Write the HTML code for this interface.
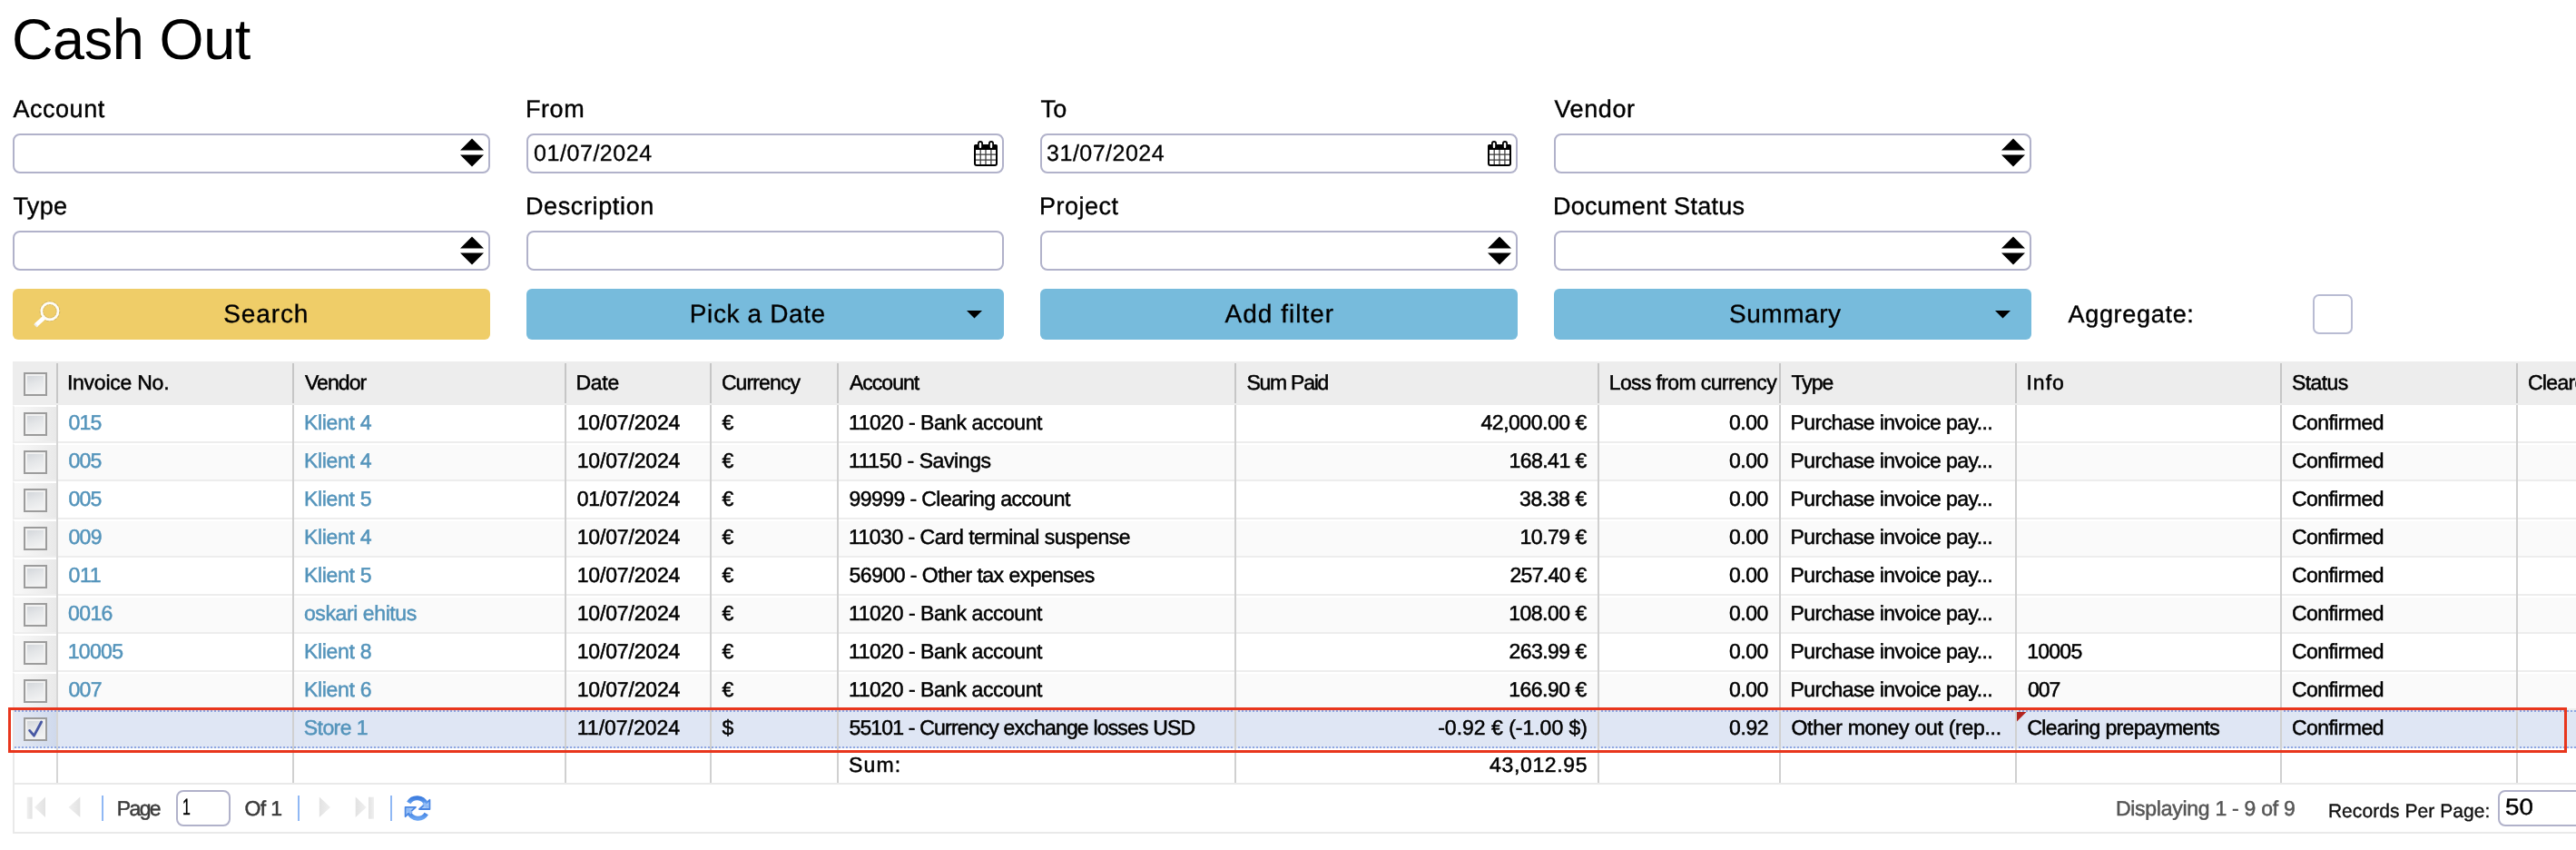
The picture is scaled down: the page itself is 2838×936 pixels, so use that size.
<!DOCTYPE html>
<html><head><meta charset="utf-8"><title>Cash Out</title>
<style>
html,body{margin:0;padding:0;background:#fff;}
body{width:2838px;height:936px;position:relative;overflow:hidden;font-family:"Liberation Sans",sans-serif;}
.t{position:absolute;white-space:nowrap;text-rendering:geometricPrecision;}
.a{position:absolute;}
.inp{position:absolute;box-sizing:border-box;width:526px;height:44px;border:2px solid #b1b2ca;border-radius:8px;background:#fff;}
.btn{position:absolute;width:526px;height:56px;border-radius:6px;}
.blue{background:#77bbdc;}
.yel{background:#efcd68;}
.cb{position:absolute;box-sizing:border-box;width:26px;height:26px;border:2px solid #9c9c9c;background:linear-gradient(160deg,#cfd3d8 0%,#e4e6e8 45%,#f6f6f6 100%);box-shadow:inset 0 0 0 2px #f1f1f1;}
.vs{position:absolute;width:2px;background:#d0d0d0;}
.hs{position:absolute;width:2px;background:#c6c6c6;top:400px;height:44px;}
.row{position:absolute;left:14px;width:2824px;height:42px;box-sizing:border-box;border-top:2px solid #fff;border-bottom:2px solid #ededed;border-left:2px solid #ededed;}
.cc{position:absolute;left:16px;width:46px;height:38px;background:linear-gradient(90deg,#f8f8f8 0%,#f1f1f1 50%,#e9e9e9 100%);}
#w{position:absolute;left:0;top:0;width:2838px;height:936px;will-change:transform;}
</style></head><body><div id="w">
<div class="t" style="top:3.00px;font-size:63px;line-height:82px;color:#000;letter-spacing:-0.375px;left:12.88px;">Cash Out</div>
<div class="t" style="top:103.00px;font-size:27px;line-height:35px;color:#000;letter-spacing:0.521px;-webkit-text-stroke:0.38px #000;left:14.50px;">Account</div>
<div class="t" style="top:210.00px;font-size:27px;line-height:35px;color:#000;letter-spacing:0.383px;-webkit-text-stroke:0.38px #000;left:14.38px;">Type</div>
<div class="inp" style="left:14px;top:147px"></div>
<div class="inp" style="left:14px;top:254px"></div>
<div class="t" style="top:103.00px;font-size:27px;line-height:35px;color:#000;letter-spacing:0.625px;-webkit-text-stroke:0.38px #000;left:578.88px;">From</div>
<div class="t" style="top:210.00px;font-size:27px;line-height:35px;color:#000;letter-spacing:0.637px;-webkit-text-stroke:0.38px #000;left:578.88px;">Description</div>
<div class="inp" style="left:580px;top:147px"></div>
<div class="inp" style="left:580px;top:254px"></div>
<div class="t" style="top:103.00px;font-size:27px;line-height:35px;color:#000;letter-spacing:0.250px;-webkit-text-stroke:0.38px #000;left:1146.38px;">To</div>
<div class="t" style="top:210.00px;font-size:27px;line-height:35px;color:#000;letter-spacing:0.500px;-webkit-text-stroke:0.38px #000;left:1144.88px;">Project</div>
<div class="inp" style="left:1146px;top:147px"></div>
<div class="inp" style="left:1146px;top:254px"></div>
<div class="t" style="top:103.00px;font-size:27px;line-height:35px;color:#000;letter-spacing:0.625px;-webkit-text-stroke:0.38px #000;left:1712.38px;">Vendor</div>
<div class="t" style="top:210.00px;font-size:27px;line-height:35px;color:#000;letter-spacing:0.295px;-webkit-text-stroke:0.38px #000;left:1710.88px;">Document Status</div>
<div class="inp" style="left:1712px;top:147px"></div>
<div class="inp" style="left:1712px;top:254px"></div>
<svg class="a" style="left:507px;top:152px" width="26" height="32" viewBox="0 0 26 32"><path d="M13 0.5 L26 13.5 L0 13.5 Z M0 18.5 L26 18.5 L13 31.5 Z" fill="#000"/></svg>
<svg class="a" style="left:2205px;top:152px" width="26" height="32" viewBox="0 0 26 32"><path d="M13 0.5 L26 13.5 L0 13.5 Z M0 18.5 L26 18.5 L13 31.5 Z" fill="#000"/></svg>
<svg class="a" style="left:507px;top:260px" width="26" height="32" viewBox="0 0 26 32"><path d="M13 0.5 L26 13.5 L0 13.5 Z M0 18.5 L26 18.5 L13 31.5 Z" fill="#000"/></svg>
<svg class="a" style="left:1639px;top:260px" width="26" height="32" viewBox="0 0 26 32"><path d="M13 0.5 L26 13.5 L0 13.5 Z M0 18.5 L26 18.5 L13 31.5 Z" fill="#000"/></svg>
<svg class="a" style="left:2205px;top:260px" width="26" height="32" viewBox="0 0 26 32"><path d="M13 0.5 L26 13.5 L0 13.5 Z M0 18.5 L26 18.5 L13 31.5 Z" fill="#000"/></svg>
<svg class="a" style="left:1073px;top:155px" width="26" height="28" viewBox="0 0 26 28">
<rect x="1" y="5" width="24" height="22" rx="2" ry="2" fill="#fff" stroke="#000" stroke-width="2"/>
<rect x="0" y="4" width="26" height="6" rx="2" fill="#000"/>
<rect x="1" y="7" width="24" height="3" fill="#000"/>
<g stroke="#3a3a3a" stroke-width="1.25"><path d="M7.2 10V26M13 10V26M18.9 10V26M2 15.1H24M2 21H24"/></g>
<rect x="4" y="0" width="6" height="9" rx="3" fill="#000"/><rect x="16" y="0" width="6" height="9" rx="3" fill="#000"/>
<rect x="5.8" y="2" width="2.4" height="6" rx="1" fill="#fff"/><rect x="17.8" y="2" width="2.4" height="6" rx="1" fill="#fff"/>
</svg>
<svg class="a" style="left:1639px;top:155px" width="26" height="28" viewBox="0 0 26 28">
<rect x="1" y="5" width="24" height="22" rx="2" ry="2" fill="#fff" stroke="#000" stroke-width="2"/>
<rect x="0" y="4" width="26" height="6" rx="2" fill="#000"/>
<rect x="1" y="7" width="24" height="3" fill="#000"/>
<g stroke="#3a3a3a" stroke-width="1.25"><path d="M7.2 10V26M13 10V26M18.9 10V26M2 15.1H24M2 21H24"/></g>
<rect x="4" y="0" width="6" height="9" rx="3" fill="#000"/><rect x="16" y="0" width="6" height="9" rx="3" fill="#000"/>
<rect x="5.8" y="2" width="2.4" height="6" rx="1" fill="#fff"/><rect x="17.8" y="2" width="2.4" height="6" rx="1" fill="#fff"/>
</svg>
<div class="t" style="top:153.00px;font-size:25px;line-height:32px;color:#000;letter-spacing:0.542px;-webkit-text-stroke:0.3px #000;left:588.12px;">01/07/2024</div>
<div class="t" style="top:153.00px;font-size:25px;line-height:32px;color:#000;letter-spacing:0.486px;-webkit-text-stroke:0.3px #000;left:1153.12px;">31/07/2024</div>
<div class="btn yel" style="left:14px;top:318px"></div>
<div class="btn blue" style="left:580px;top:318px"></div>
<div class="btn blue" style="left:1146px;top:318px"></div>
<div class="btn blue" style="left:1712px;top:318px"></div>
<div class="t" style="top:328.00px;font-size:28px;line-height:36px;color:#000;letter-spacing:0.875px;-webkit-text-stroke:0.32px #000;left:246.25px;">Search</div>
<div class="t" style="top:328.00px;font-size:28px;line-height:36px;color:#000;letter-spacing:0.625px;-webkit-text-stroke:0.32px #000;left:759.75px;">Pick a Date</div>
<div class="t" style="top:328.00px;font-size:28px;line-height:36px;color:#000;letter-spacing:1.022px;-webkit-text-stroke:0.32px #000;left:1349.50px;">Add filter</div>
<div class="t" style="top:328.00px;font-size:28px;line-height:36px;color:#000;letter-spacing:0.533px;-webkit-text-stroke:0.32px #000;left:1905.05px;">Summary</div>
<svg class="a" style="left:1065.25px;top:342px" width="17" height="9" viewBox="0 0 17 9"><path d="M0 0H17L8.5 8.5Z" fill="#000"/></svg>
<svg class="a" style="left:2197.5px;top:342px" width="17" height="9" viewBox="0 0 17 9"><path d="M0 0H17L8.5 8.5Z" fill="#000"/></svg>
<svg class="a" style="left:34px;top:328px" width="40" height="36" viewBox="0 0 40 36">
<circle cx="20.9" cy="14.75" r="9.1" fill="none" stroke="#a8955c" stroke-width="4.6" opacity="0.45" stroke-dasharray="2.2 1.6"/>
<path d="M15.5 21 L5.5 30" stroke="#fff" stroke-width="4.6" stroke-linecap="butt"/>
<path d="M4 28.5 l3.2 3.4" stroke="#ececec" stroke-width="2"/>
<circle cx="20.9" cy="14.75" r="9.1" fill="none" stroke="#fdfcf8" stroke-width="2.7"/>
</svg>
<div class="t" style="top:329.00px;font-size:27px;line-height:35px;color:#000;letter-spacing:0.694px;-webkit-text-stroke:0.38px #000;left:2278.50px;">Aggregate:</div>
<div class="a" style="left:2548px;top:324px;width:44px;height:44px;box-sizing:border-box;border:2px solid #b9bcd3;border-radius:7px;background:#fff"></div>
<div class="a" style="left:14px;top:398px;width:2824px;height:48px;background:#ededed"></div>
<div class="hs" style="left:62px"></div>
<div class="hs" style="left:322px"></div>
<div class="hs" style="left:622px"></div>
<div class="hs" style="left:782px"></div>
<div class="hs" style="left:922px"></div>
<div class="hs" style="left:1360px"></div>
<div class="hs" style="left:1760px"></div>
<div class="hs" style="left:1960px"></div>
<div class="hs" style="left:2220px"></div>
<div class="hs" style="left:2512px"></div>
<div class="hs" style="left:2772px"></div>
<div class="cb" style="left:26px;top:410px"></div>
<div class="t" style="top:406.00px;font-size:23px;line-height:30px;color:#000;letter-spacing:-0.237px;-webkit-text-stroke:0.5px #000;left:73.88px;">Invoice No.</div>
<div class="t" style="top:406.00px;font-size:23px;line-height:30px;color:#000;letter-spacing:-0.900px;-webkit-text-stroke:0.5px #000;left:335.88px;">Vendor</div>
<div class="t" style="top:406.00px;font-size:23px;line-height:30px;color:#000;letter-spacing:-0.208px;-webkit-text-stroke:0.5px #000;left:634.38px;">Date</div>
<div class="t" style="top:406.00px;font-size:23px;line-height:30px;color:#000;letter-spacing:-0.875px;-webkit-text-stroke:0.5px #000;left:794.88px;">Currency</div>
<div class="t" style="top:406.00px;font-size:23px;line-height:30px;color:#000;letter-spacing:-1.000px;-webkit-text-stroke:0.5px #000;left:936.00px;">Account</div>
<div class="t" style="top:406.00px;font-size:23px;line-height:30px;color:#000;letter-spacing:-1.250px;-webkit-text-stroke:0.5px #000;left:1373.40px;">Sum Paid</div>
<div class="t" style="top:406.00px;font-size:23px;line-height:30px;color:#000;letter-spacing:-0.625px;-webkit-text-stroke:0.5px #000;left:1772.72px;">Loss from currency</div>
<div class="t" style="top:406.00px;font-size:23px;line-height:30px;color:#000;letter-spacing:-0.992px;-webkit-text-stroke:0.5px #000;left:1973.40px;">Type</div>
<div class="t" style="top:406.00px;font-size:23px;line-height:30px;color:#000;letter-spacing:1.042px;-webkit-text-stroke:0.5px #000;left:2232.38px;">Info</div>
<div class="t" style="top:406.00px;font-size:23px;line-height:30px;color:#000;letter-spacing:-0.600px;-webkit-text-stroke:0.5px #000;left:2525.00px;">Status</div>
<div class="t" style="top:406.00px;font-size:23px;line-height:30px;color:#000;letter-spacing:-0.667px;-webkit-text-stroke:0.5px #000;left:2784.88px;">Cleared</div>
<div class="row" style="top:446px;background:#fff"></div>
<div class="cc" style="top:448px"></div>
<div class="cb" style="left:26px;top:454px"></div>
<div class="t" style="top:450.00px;font-size:23px;line-height:30px;color:#5494bb;letter-spacing:-0.688px;-webkit-text-stroke:0.5px #5494bb;left:75.38px;">015</div>
<div class="t" style="top:450.00px;font-size:23px;line-height:30px;color:#5494bb;letter-spacing:-0.311px;-webkit-text-stroke:0.5px #5494bb;left:334.93px;">Klient 4</div>
<div class="t" style="top:450.00px;font-size:23px;line-height:30px;color:#000;letter-spacing:-0.172px;-webkit-text-stroke:0.5px #000;left:635.75px;">10/07/2024</div>
<div class="t" style="top:450.00px;font-size:23px;line-height:30px;color:#000;-webkit-text-stroke:0.5px #000;left:795.58px;">€</div>
<div class="t" style="top:450.00px;font-size:23px;line-height:30px;color:#000;letter-spacing:-0.454px;-webkit-text-stroke:0.5px #000;left:935.00px;">11020 - Bank account</div>
<div class="t" style="top:450.00px;font-size:23px;line-height:30px;color:#000;letter-spacing:-0.475px;-webkit-text-stroke:0.5px #000;left:1631.50px;">42,000.00 €</div>
<div class="t" style="top:450.00px;font-size:23px;line-height:30px;color:#000;letter-spacing:-0.417px;-webkit-text-stroke:0.5px #000;left:1904.88px;">0.00</div>
<div class="t" style="top:450.00px;font-size:23px;line-height:30px;color:#000;letter-spacing:-0.591px;-webkit-text-stroke:0.5px #000;left:1972.62px;">Purchase invoice pay...</div>
<div class="t" style="top:450.00px;font-size:23px;line-height:30px;color:#000;letter-spacing:-0.562px;-webkit-text-stroke:0.5px #000;left:2524.88px;">Confirmed</div>
<div class="row" style="top:488px;background:#fafafa"></div>
<div class="cc" style="top:490px"></div>
<div class="cb" style="left:26px;top:496px"></div>
<div class="t" style="top:492.00px;font-size:23px;line-height:30px;color:#5494bb;letter-spacing:-0.688px;-webkit-text-stroke:0.5px #5494bb;left:75.38px;">005</div>
<div class="t" style="top:492.00px;font-size:23px;line-height:30px;color:#5494bb;letter-spacing:-0.311px;-webkit-text-stroke:0.5px #5494bb;left:334.93px;">Klient 4</div>
<div class="t" style="top:492.00px;font-size:23px;line-height:30px;color:#000;letter-spacing:-0.172px;-webkit-text-stroke:0.5px #000;left:635.75px;">10/07/2024</div>
<div class="t" style="top:492.00px;font-size:23px;line-height:30px;color:#000;-webkit-text-stroke:0.5px #000;left:795.58px;">€</div>
<div class="t" style="top:492.00px;font-size:23px;line-height:30px;color:#000;letter-spacing:-0.411px;-webkit-text-stroke:0.5px #000;left:935.00px;">11150 - Savings</div>
<div class="t" style="top:492.00px;font-size:23px;line-height:30px;color:#000;letter-spacing:-0.536px;-webkit-text-stroke:0.5px #000;left:1662.50px;">168.41 €</div>
<div class="t" style="top:492.00px;font-size:23px;line-height:30px;color:#000;letter-spacing:-0.417px;-webkit-text-stroke:0.5px #000;left:1904.88px;">0.00</div>
<div class="t" style="top:492.00px;font-size:23px;line-height:30px;color:#000;letter-spacing:-0.591px;-webkit-text-stroke:0.5px #000;left:1972.62px;">Purchase invoice pay...</div>
<div class="t" style="top:492.00px;font-size:23px;line-height:30px;color:#000;letter-spacing:-0.562px;-webkit-text-stroke:0.5px #000;left:2524.88px;">Confirmed</div>
<div class="row" style="top:530px;background:#fff"></div>
<div class="cc" style="top:532px"></div>
<div class="cb" style="left:26px;top:538px"></div>
<div class="t" style="top:534.00px;font-size:23px;line-height:30px;color:#5494bb;letter-spacing:-0.688px;-webkit-text-stroke:0.5px #5494bb;left:75.38px;">005</div>
<div class="t" style="top:534.00px;font-size:23px;line-height:30px;color:#5494bb;letter-spacing:-0.311px;-webkit-text-stroke:0.5px #5494bb;left:334.93px;">Klient 5</div>
<div class="t" style="top:534.00px;font-size:23px;line-height:30px;color:#000;letter-spacing:-0.169px;-webkit-text-stroke:0.5px #000;left:635.73px;">01/07/2024</div>
<div class="t" style="top:534.00px;font-size:23px;line-height:30px;color:#000;-webkit-text-stroke:0.5px #000;left:795.58px;">€</div>
<div class="t" style="top:534.00px;font-size:23px;line-height:30px;color:#000;letter-spacing:-0.571px;-webkit-text-stroke:0.5px #000;left:935.50px;">99999 - Clearing account</div>
<div class="t" style="top:534.00px;font-size:23px;line-height:30px;color:#000;letter-spacing:-0.438px;-webkit-text-stroke:0.5px #000;left:1674.12px;">38.38 €</div>
<div class="t" style="top:534.00px;font-size:23px;line-height:30px;color:#000;letter-spacing:-0.417px;-webkit-text-stroke:0.5px #000;left:1904.88px;">0.00</div>
<div class="t" style="top:534.00px;font-size:23px;line-height:30px;color:#000;letter-spacing:-0.591px;-webkit-text-stroke:0.5px #000;left:1972.62px;">Purchase invoice pay...</div>
<div class="t" style="top:534.00px;font-size:23px;line-height:30px;color:#000;letter-spacing:-0.562px;-webkit-text-stroke:0.5px #000;left:2524.88px;">Confirmed</div>
<div class="row" style="top:572px;background:#fafafa"></div>
<div class="cc" style="top:574px"></div>
<div class="cb" style="left:26px;top:580px"></div>
<div class="t" style="top:576.00px;font-size:23px;line-height:30px;color:#5494bb;letter-spacing:-0.625px;-webkit-text-stroke:0.5px #5494bb;left:75.38px;">009</div>
<div class="t" style="top:576.00px;font-size:23px;line-height:30px;color:#5494bb;letter-spacing:-0.311px;-webkit-text-stroke:0.5px #5494bb;left:334.93px;">Klient 4</div>
<div class="t" style="top:576.00px;font-size:23px;line-height:30px;color:#000;letter-spacing:-0.172px;-webkit-text-stroke:0.5px #000;left:635.75px;">10/07/2024</div>
<div class="t" style="top:576.00px;font-size:23px;line-height:30px;color:#000;-webkit-text-stroke:0.5px #000;left:795.58px;">€</div>
<div class="t" style="top:576.00px;font-size:23px;line-height:30px;color:#000;letter-spacing:-0.517px;-webkit-text-stroke:0.5px #000;left:935.00px;">11030 - Card terminal suspense</div>
<div class="t" style="top:576.00px;font-size:23px;line-height:30px;color:#000;letter-spacing:-0.500px;-webkit-text-stroke:0.5px #000;left:1674.50px;">10.79 €</div>
<div class="t" style="top:576.00px;font-size:23px;line-height:30px;color:#000;letter-spacing:-0.417px;-webkit-text-stroke:0.5px #000;left:1904.88px;">0.00</div>
<div class="t" style="top:576.00px;font-size:23px;line-height:30px;color:#000;letter-spacing:-0.591px;-webkit-text-stroke:0.5px #000;left:1972.62px;">Purchase invoice pay...</div>
<div class="t" style="top:576.00px;font-size:23px;line-height:30px;color:#000;letter-spacing:-0.562px;-webkit-text-stroke:0.5px #000;left:2524.88px;">Confirmed</div>
<div class="row" style="top:614px;background:#fff"></div>
<div class="cc" style="top:616px"></div>
<div class="cb" style="left:26px;top:622px"></div>
<div class="t" style="top:618.00px;font-size:23px;line-height:30px;color:#5494bb;letter-spacing:-0.250px;-webkit-text-stroke:0.5px #5494bb;left:75.38px;">011</div>
<div class="t" style="top:618.00px;font-size:23px;line-height:30px;color:#5494bb;letter-spacing:-0.311px;-webkit-text-stroke:0.5px #5494bb;left:334.93px;">Klient 5</div>
<div class="t" style="top:618.00px;font-size:23px;line-height:30px;color:#000;letter-spacing:-0.172px;-webkit-text-stroke:0.5px #000;left:635.75px;">10/07/2024</div>
<div class="t" style="top:618.00px;font-size:23px;line-height:30px;color:#000;-webkit-text-stroke:0.5px #000;left:795.58px;">€</div>
<div class="t" style="top:618.00px;font-size:23px;line-height:30px;color:#000;letter-spacing:-0.530px;-webkit-text-stroke:0.5px #000;left:935.62px;">56900 - Other tax expenses</div>
<div class="t" style="top:618.00px;font-size:23px;line-height:30px;color:#000;letter-spacing:-0.661px;-webkit-text-stroke:0.5px #000;left:1663.38px;">257.40 €</div>
<div class="t" style="top:618.00px;font-size:23px;line-height:30px;color:#000;letter-spacing:-0.417px;-webkit-text-stroke:0.5px #000;left:1904.88px;">0.00</div>
<div class="t" style="top:618.00px;font-size:23px;line-height:30px;color:#000;letter-spacing:-0.591px;-webkit-text-stroke:0.5px #000;left:1972.62px;">Purchase invoice pay...</div>
<div class="t" style="top:618.00px;font-size:23px;line-height:30px;color:#000;letter-spacing:-0.562px;-webkit-text-stroke:0.5px #000;left:2524.88px;">Confirmed</div>
<div class="row" style="top:656px;background:#fafafa"></div>
<div class="cc" style="top:658px"></div>
<div class="cb" style="left:26px;top:664px"></div>
<div class="t" style="top:660.00px;font-size:23px;line-height:30px;color:#5494bb;letter-spacing:-0.658px;-webkit-text-stroke:0.5px #5494bb;left:75.12px;">0016</div>
<div class="t" style="top:660.00px;font-size:23px;line-height:30px;color:#5494bb;letter-spacing:-0.400px;-webkit-text-stroke:0.5px #5494bb;left:334.93px;">oskari ehitus</div>
<div class="t" style="top:660.00px;font-size:23px;line-height:30px;color:#000;letter-spacing:-0.172px;-webkit-text-stroke:0.5px #000;left:635.75px;">10/07/2024</div>
<div class="t" style="top:660.00px;font-size:23px;line-height:30px;color:#000;-webkit-text-stroke:0.5px #000;left:795.58px;">€</div>
<div class="t" style="top:660.00px;font-size:23px;line-height:30px;color:#000;letter-spacing:-0.454px;-webkit-text-stroke:0.5px #000;left:935.00px;">11020 - Bank account</div>
<div class="t" style="top:660.00px;font-size:23px;line-height:30px;color:#000;letter-spacing:-0.500px;-webkit-text-stroke:0.5px #000;left:1662.25px;">108.00 €</div>
<div class="t" style="top:660.00px;font-size:23px;line-height:30px;color:#000;letter-spacing:-0.417px;-webkit-text-stroke:0.5px #000;left:1904.88px;">0.00</div>
<div class="t" style="top:660.00px;font-size:23px;line-height:30px;color:#000;letter-spacing:-0.591px;-webkit-text-stroke:0.5px #000;left:1972.62px;">Purchase invoice pay...</div>
<div class="t" style="top:660.00px;font-size:23px;line-height:30px;color:#000;letter-spacing:-0.562px;-webkit-text-stroke:0.5px #000;left:2524.88px;">Confirmed</div>
<div class="row" style="top:698px;background:#fff"></div>
<div class="cc" style="top:700px"></div>
<div class="cb" style="left:26px;top:706px"></div>
<div class="t" style="top:702.00px;font-size:23px;line-height:30px;color:#5494bb;letter-spacing:-0.688px;-webkit-text-stroke:0.5px #5494bb;left:74.75px;">10005</div>
<div class="t" style="top:702.00px;font-size:23px;line-height:30px;color:#5494bb;letter-spacing:-0.311px;-webkit-text-stroke:0.5px #5494bb;left:334.93px;">Klient 8</div>
<div class="t" style="top:702.00px;font-size:23px;line-height:30px;color:#000;letter-spacing:-0.172px;-webkit-text-stroke:0.5px #000;left:635.75px;">10/07/2024</div>
<div class="t" style="top:702.00px;font-size:23px;line-height:30px;color:#000;-webkit-text-stroke:0.5px #000;left:795.58px;">€</div>
<div class="t" style="top:702.00px;font-size:23px;line-height:30px;color:#000;letter-spacing:-0.454px;-webkit-text-stroke:0.5px #000;left:935.00px;">11020 - Bank account</div>
<div class="t" style="top:702.00px;font-size:23px;line-height:30px;color:#000;letter-spacing:-0.518px;-webkit-text-stroke:0.5px #000;left:1662.38px;">263.99 €</div>
<div class="t" style="top:702.00px;font-size:23px;line-height:30px;color:#000;letter-spacing:-0.417px;-webkit-text-stroke:0.5px #000;left:1904.88px;">0.00</div>
<div class="t" style="top:702.00px;font-size:23px;line-height:30px;color:#000;letter-spacing:-0.591px;-webkit-text-stroke:0.5px #000;left:1972.62px;">Purchase invoice pay...</div>
<div class="t" style="top:702.00px;font-size:23px;line-height:30px;color:#000;letter-spacing:-0.750px;-webkit-text-stroke:0.5px #000;left:2233.25px;">10005</div>
<div class="t" style="top:702.00px;font-size:23px;line-height:30px;color:#000;letter-spacing:-0.562px;-webkit-text-stroke:0.5px #000;left:2524.88px;">Confirmed</div>
<div class="row" style="top:740px;background:#fafafa"></div>
<div class="cc" style="top:742px"></div>
<div class="cb" style="left:26px;top:748px"></div>
<div class="t" style="top:744.00px;font-size:23px;line-height:30px;color:#5494bb;letter-spacing:-0.562px;-webkit-text-stroke:0.5px #5494bb;left:75.38px;">007</div>
<div class="t" style="top:744.00px;font-size:23px;line-height:30px;color:#5494bb;letter-spacing:-0.311px;-webkit-text-stroke:0.5px #5494bb;left:334.93px;">Klient 6</div>
<div class="t" style="top:744.00px;font-size:23px;line-height:30px;color:#000;letter-spacing:-0.172px;-webkit-text-stroke:0.5px #000;left:635.75px;">10/07/2024</div>
<div class="t" style="top:744.00px;font-size:23px;line-height:30px;color:#000;-webkit-text-stroke:0.5px #000;left:795.58px;">€</div>
<div class="t" style="top:744.00px;font-size:23px;line-height:30px;color:#000;letter-spacing:-0.454px;-webkit-text-stroke:0.5px #000;left:935.00px;">11020 - Bank account</div>
<div class="t" style="top:744.00px;font-size:23px;line-height:30px;color:#000;letter-spacing:-0.500px;-webkit-text-stroke:0.5px #000;left:1662.25px;">166.90 €</div>
<div class="t" style="top:744.00px;font-size:23px;line-height:30px;color:#000;letter-spacing:-0.417px;-webkit-text-stroke:0.5px #000;left:1904.88px;">0.00</div>
<div class="t" style="top:744.00px;font-size:23px;line-height:30px;color:#000;letter-spacing:-0.591px;-webkit-text-stroke:0.5px #000;left:1972.62px;">Purchase invoice pay...</div>
<div class="t" style="top:744.00px;font-size:23px;line-height:30px;color:#000;letter-spacing:-1.062px;-webkit-text-stroke:0.5px #000;left:2234.12px;">007</div>
<div class="t" style="top:744.00px;font-size:23px;line-height:30px;color:#000;letter-spacing:-0.562px;-webkit-text-stroke:0.5px #000;left:2524.88px;">Confirmed</div>
<div class="a" style="left:14px;top:782px;width:2px;height:42px;background:#e6e7ea"></div>
<div class="a" style="left:16px;top:782px;width:2822px;height:42px;box-sizing:border-box;background:#dfe6f4;border-top:2px dotted #8fa7e2;border-bottom:2px dotted #8fa7e2"></div>
<div class="a" style="left:16px;top:784px;width:46px;height:38px;background:linear-gradient(90deg,#e4e9f4 0%,#cfd9ec 100%)"></div>
<div class="cb" style="left:26px;top:790px"></div>
<div class="t" style="top:786.00px;font-size:23px;line-height:30px;color:#5494bb;letter-spacing:-0.571px;-webkit-text-stroke:0.5px #5494bb;left:334.80px;">Store 1</div>
<div class="t" style="top:786.00px;font-size:23px;line-height:30px;color:#000;-webkit-text-stroke:0.5px #000;left:635.75px;">11/07/2024</div>
<div class="t" style="top:786.00px;font-size:23px;line-height:30px;color:#000;-webkit-text-stroke:0.5px #000;left:795.55px;">$</div>
<div class="t" style="top:786.00px;font-size:23px;line-height:30px;color:#000;letter-spacing:-0.816px;-webkit-text-stroke:0.5px #000;left:935.42px;">55101 - Currency exchange losses USD</div>
<div class="t" style="top:786.00px;font-size:23px;line-height:30px;color:#000;letter-spacing:-0.006px;-webkit-text-stroke:0.5px #000;left:1584.20px;">-0.92 € (-1.00 $)</div>
<div class="t" style="top:786.00px;font-size:23px;line-height:30px;color:#000;letter-spacing:-0.417px;-webkit-text-stroke:0.5px #000;left:1905.12px;">0.92</div>
<div class="t" style="top:786.00px;font-size:23px;line-height:30px;color:#000;letter-spacing:-0.284px;-webkit-text-stroke:0.5px #000;left:1973.50px;">Other money out (rep...</div>
<div class="t" style="top:786.00px;font-size:23px;line-height:30px;color:#000;letter-spacing:-0.664px;-webkit-text-stroke:0.5px #000;left:2233.38px;">Clearing prepayments</div>
<div class="t" style="top:786.00px;font-size:23px;line-height:30px;color:#000;letter-spacing:-0.562px;-webkit-text-stroke:0.5px #000;left:2524.88px;">Confirmed</div>
<div class="vs" style="left:322px;top:446px;height:416px"></div>
<div class="vs" style="left:622px;top:446px;height:416px"></div>
<div class="vs" style="left:782px;top:446px;height:416px"></div>
<div class="vs" style="left:922px;top:446px;height:416px"></div>
<div class="vs" style="left:1360px;top:446px;height:416px"></div>
<div class="vs" style="left:1760px;top:446px;height:416px"></div>
<div class="vs" style="left:1960px;top:446px;height:416px"></div>
<div class="vs" style="left:2220px;top:446px;height:416px"></div>
<div class="vs" style="left:2512px;top:446px;height:416px"></div>
<div class="vs" style="left:2772px;top:446px;height:416px"></div>
<div class="vs" style="left:62px;top:446px;height:416px;background:#d6d6d6"></div>
<div class="a" style="left:14px;top:824px;width:2px;height:94px;background:#e9e9e9"></div>
<div class="a" style="left:14px;top:862px;width:2824px;height:2px;background:#e9e9e9"></div>
<div class="a" style="left:14px;top:916px;width:2824px;height:2px;background:#e9e9e9"></div>
<div class="t" style="top:827.00px;font-size:23px;line-height:30px;color:#000;letter-spacing:1.125px;-webkit-text-stroke:0.5px #000;left:935.00px;">Sum:</div>
<div class="t" style="top:827.00px;font-size:23px;line-height:30px;color:#000;letter-spacing:0.653px;-webkit-text-stroke:0.5px #000;left:1641.00px;">43,012.95</div>
<svg class="a" style="left:26px;top:790px" width="26" height="26" viewBox="0 0 26 26"><path d="M6.6 14.4 L11.5 20.2 L19.6 5" fill="none" stroke="#4858a3" stroke-width="2.8" stroke-linecap="round" stroke-linejoin="round"/></svg>
<svg class="a" style="left:2222px;top:784px" width="11" height="11" viewBox="0 0 11 11"><path d="M0 0H10.5L0 10.5Z" fill="#b3241f"/></svg>
<div class="a" style="left:9px;top:779px;width:2819px;height:50px;box-sizing:border-box;border:3px solid #e8361d"></div>
<svg class="a" style="left:28px;top:874px" width="450" height="32" viewBox="0 0 450 32">
<defs><linearGradient id="gg" x1="0" y1="0" x2="1" y2="0"><stop offset="0" stop-color="#f0f0f0"/><stop offset="1" stop-color="#e2e2e2"/></linearGradient>
<linearGradient id="gh" x1="0" y1="0" x2="1" y2="0"><stop offset="0" stop-color="#e2e2e2"/><stop offset="1" stop-color="#f0f0f0"/></linearGradient>
<linearGradient id="gb" x1="0" y1="0" x2="0" y2="1"><stop offset="0" stop-color="#3f7fe0"/><stop offset="1" stop-color="#69a4f2"/></linearGradient></defs>
<g fill="url(#gg)">
<rect x="1.7" y="3.7" width="5.9" height="24"/><path d="M22 3.4V26L10 15Z"/>
<path d="M60.3 3.4V26L47.5 15Z"/></g>
<g fill="url(#gh)">
<path d="M323.8 3.4V26L336 15Z"/>
<path d="M363.7 3.4V26L375.6 15Z"/><rect x="378" y="3.7" width="6" height="24"/>
</g>
<g fill="#90b8f4"><rect x="84" y="2" width="2" height="28"/><rect x="300" y="2" width="2" height="28"/><rect x="402" y="2" width="2" height="28"/></g>
<g transform="translate(417,1)">
<path d="M28.4 5.8V16H17Z" fill="#a9cbf7" stroke="#4b87e3" stroke-width="1.8" stroke-linejoin="round"/>
<path d="M1.6 24.2V13.8H13Z" fill="#a9cbf7" stroke="#4b87e3" stroke-width="1.8" stroke-linejoin="round"/>
<path d="M5.25 9 A10.8 10.8 0 0 1 24.4 10.2" fill="none" stroke="url(#gb)" stroke-width="5"/>
<path d="M24.75 21 A10.8 10.8 0 0 1 5.6 19.8" fill="none" stroke="url(#gb)" stroke-width="5"/>
<path d="M21.5 9.5 L26.5 14" stroke="#8fbaf5" stroke-width="3.4"/>
<path d="M8.5 20.5 L3.5 16" stroke="#8fbaf5" stroke-width="3.4"/>
</g>
</svg>
<div class="t" style="top:875.00px;font-size:23px;line-height:30px;color:#3c3c3c;letter-spacing:-1.650px;-webkit-text-stroke:0.5px #3c3c3c;left:128.82px;">Page</div>
<div class="a" style="left:194px;top:870px;width:60px;height:40px;box-sizing:border-box;border:2px solid #b1b2ca;border-radius:8px;background:#fff"></div>
<div class="t" style="top:873.00px;font-size:25px;line-height:32px;color:#000;-webkit-text-stroke:0.4px #000;left:201.21px;transform:scaleX(0.6345);transform-origin:0 0;">1</div>
<div class="t" style="top:875.00px;font-size:23px;line-height:30px;color:#3c3c3c;letter-spacing:-0.592px;-webkit-text-stroke:0.5px #3c3c3c;left:269.40px;">Of 1</div>
<div class="t" style="top:875.00px;font-size:23px;line-height:30px;color:#555;letter-spacing:-0.269px;-webkit-text-stroke:0.5px #555;left:2330.88px;">Displaying 1 - 9 of 9</div>
<div class="t" style="top:880.00px;font-size:21px;line-height:27px;color:#111;letter-spacing:0.062px;-webkit-text-stroke:0.35px #111;left:2564.88px;">Records Per Page:</div>
<div class="a" style="left:2752px;top:870px;width:120px;height:40px;box-sizing:border-box;border:2px solid #b1b2ca;border-radius:8px;background:#fff"></div>
<div class="t" style="top:873.00px;font-size:25px;line-height:32px;color:#000;-webkit-text-stroke:0.4px #000;left:2760.39px;transform:scaleX(1.1092);transform-origin:0 0;">50</div>
</div></body></html>
